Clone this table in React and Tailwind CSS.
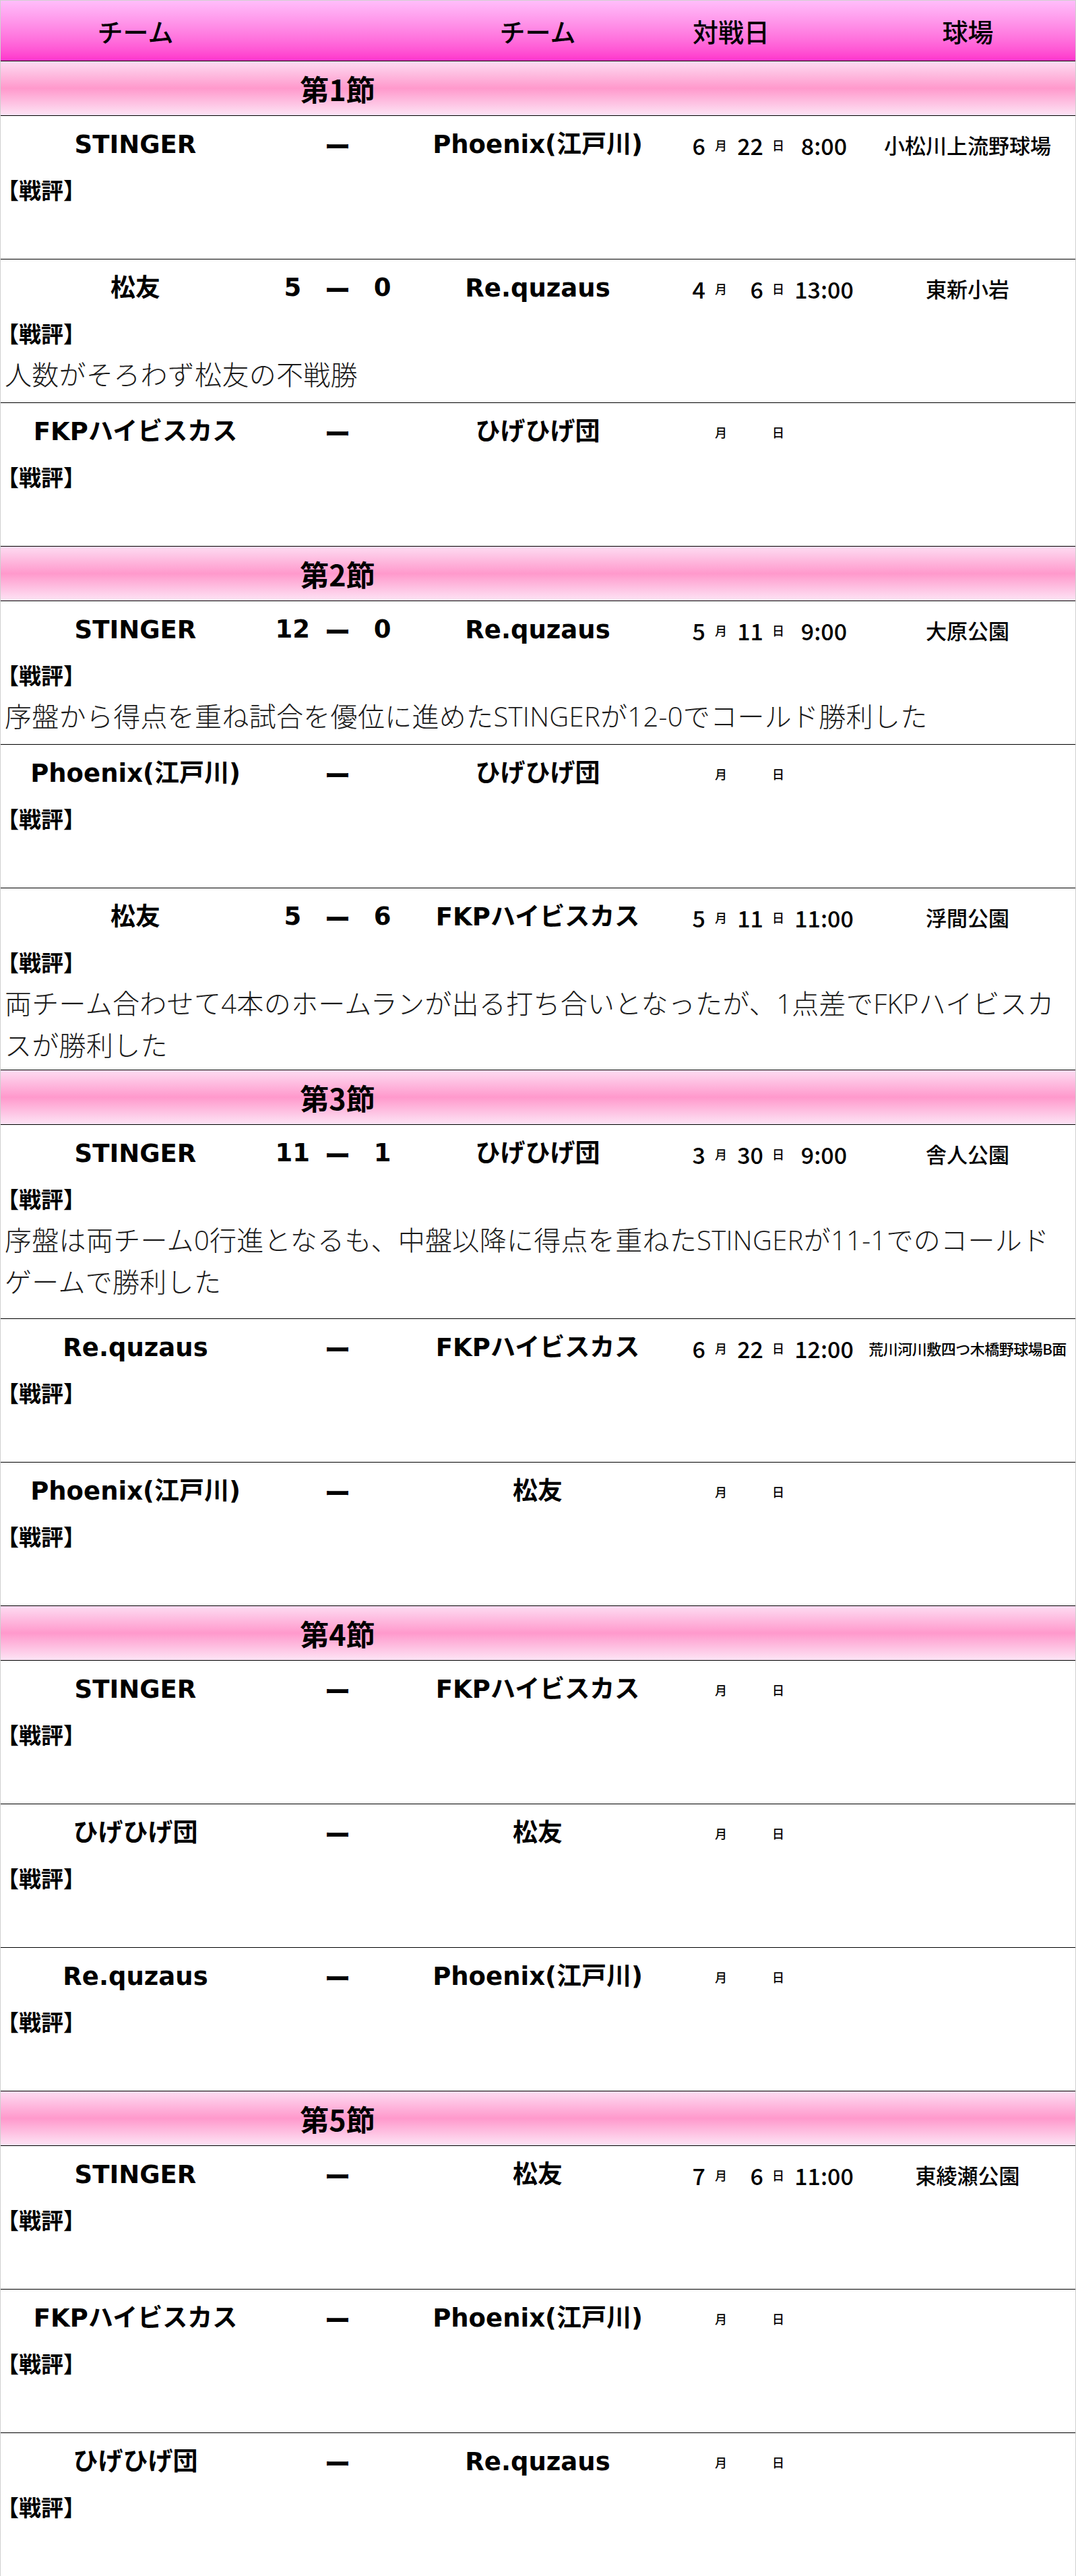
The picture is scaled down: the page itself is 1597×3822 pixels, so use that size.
import React from 'react';

const SECTIONS = [
  {
    title: '第1節',
    games: [
      { home: 'STINGER', away: 'Phoenix(江戸川)', m: '6', d: '22', time: '8:00', venue: '小松川上流野球場' },
      { home: '松友', hs: '5', as: '0', away: 'Re.quzaus', m: '4', d: '6', time: '13:00', venue: '東新小岩', note: '人数がそろわず松友の不戦勝' },
      { home: 'FKPハイビスカス', away: 'ひげひげ団' },
    ],
  },
  {
    title: '第2節',
    games: [
      { home: 'STINGER', hs: '12', as: '0', away: 'Re.quzaus', m: '5', d: '11', time: '9:00', venue: '大原公園', note: '序盤から得点を重ね試合を優位に進めたSTINGERが12-0でコールド勝利した' },
      { home: 'Phoenix(江戸川)', away: 'ひげひげ団' },
      { home: '松友', hs: '5', as: '6', away: 'FKPハイビスカス', m: '5', d: '11', time: '11:00', venue: '浮間公園', note: '両チーム合わせて4本のホームランが出る打ち合いとなったが、1点差でFKPハイビスカスが勝利した', pad: 'short' },
    ],
  },
  {
    title: '第3節',
    games: [
      { home: 'STINGER', hs: '11', as: '1', away: 'ひげひげ団', m: '3', d: '30', time: '9:00', venue: '舎人公園', note: '序盤は両チーム0行進となるも、中盤以降に得点を重ねたSTINGERが11-1でのコールドゲームで勝利した', pad: 'tall' },
      { home: 'Re.quzaus', away: 'FKPハイビスカス', m: '6', d: '22', time: '12:00', venue: '荒川河川敷四つ木橋野球場B面', small: true },
      { home: 'Phoenix(江戸川)', away: '松友' },
    ],
  },
  {
    title: '第4節',
    games: [
      { home: 'STINGER', away: 'FKPハイビスカス' },
      { home: 'ひげひげ団', away: '松友' },
      { home: 'Re.quzaus', away: 'Phoenix(江戸川)' },
    ],
  },
  {
    title: '第5節',
    games: [
      { home: 'STINGER', away: '松友', m: '7', d: '6', time: '11:00', venue: '東綾瀬公園' },
      { home: 'FKPハイビスカス', away: 'Phoenix(江戸川)' },
      { home: 'ひげひげ団', away: 'Re.quzaus' },
    ],
  },
];

const cjk = "font-['Noto_Sans_CJK_JP',sans-serif]";
const team = "font-['DejaVu_Sans','Noto_Sans_CJK_JP',sans-serif] text-[37px] font-bold";

function GameRow({ g }) {
  const pb = g.pad === 'tall' ? 'pb-[23px]' : g.pad === 'short' ? 'pb-[5px]' : 'pb-[10px]';
  return (
    <div className={'border-b border-black pt-[12px] ' + pb}>
      <div className="grid grid-cols-[400px_200px_394px_281px_1fr] h-[62px] items-center">
        <div className={'text-center whitespace-nowrap ' + team}>{g.home}</div>
        <div className={'grid grid-cols-3 text-center ' + team}>
          <span>{g.hs}</span>
          <span className={cjk + ' text-[39px]'}>ー</span>
          <span>{g.as}</span>
        </div>
        <div className={'text-center whitespace-nowrap ' + team}>{g.away}</div>
        <div className={'flex items-center font-medium ' + cjk}>
          <span className="w-[52px] text-right text-[34px]">{g.m}</span>
          <span className="w-[46px] text-center text-[18px]">月</span>
          <span className="w-[40px] text-right text-[34px]">{g.d}</span>
          <span className="w-[44px] text-center text-[18px]">日</span>
          <span className="w-[92px] text-center text-[34px]">{g.time}</span>
        </div>
        <div
          className={
            (g.small
              ? 'text-[22px] tracking-[-0.5px] '
              : 'text-[31px] ') + 'text-center font-medium whitespace-nowrap ' + cjk
          }
        >
          {g.venue}
        </div>
      </div>
      <div className={'h-[60px] mt-[6px] ml-[-6px] flex items-center text-[33px] font-bold ' + cjk}>
        【戦評】
      </div>
      <div className="min-h-[62px] leading-[62px] pl-[6px] text-[40px] font-light tracking-[0.3px] text-[#1a1a1a] font-['Open_Sans','Noto_Sans_CJK_JP',sans-serif]">
        {g.note}
      </div>
    </div>
  );
}

export default function App() {
  return (
    <div className="w-[1597px] bg-white text-black border-x border-t border-[#cfcfcf]">
      <div
        className={
          'grid grid-cols-[400px_200px_394px_180px_1fr] h-[90px] items-center border-b border-black bg-gradient-to-b from-[#ffbdfa] to-[#ff33cc] text-[38px] font-medium ' +
          cjk
        }
      >
        <div className="text-center">チーム</div>
        <div />
        <div className="text-center">チーム</div>
        <div className="text-center">対戦日</div>
        <div className="text-center pl-[102px]">球場</div>
      </div>
      {SECTIONS.map((s) => (
        <div key={s.title}>
          <div className="grid grid-cols-[400px_200px_1fr] h-[81px] items-center border-b border-black bg-[linear-gradient(to_bottom,#fddcf2_0%,#ff99cc_50%,#fde4f5_100%)]">
            <div />
            <div className={'text-center text-[43px] font-bold whitespace-nowrap ' + cjk}>{s.title}</div>
            <div />
          </div>
          {s.games.map((g, i) => (
            <GameRow key={i} g={g} />
          ))}
        </div>
      ))}
    </div>
  );
}
